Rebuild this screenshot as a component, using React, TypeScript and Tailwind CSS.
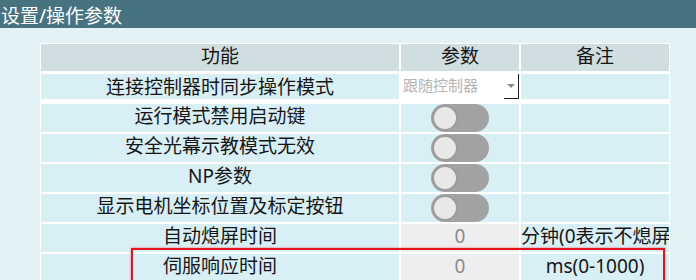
const rows: { label: string; kind: "select" | "toggle" | "input"; note?: string }[] = [
  { label: "连接控制器时同步操作模式", kind: "select" },
  { label: "运行模式禁用启动键", kind: "toggle" },
  { label: "安全光幕示教模式无效", kind: "toggle" },
  { label: "NP参数", kind: "toggle" },
  { label: "显示电机坐标位置及标定按钮", kind: "toggle" },
  { label: "自动熄屏时间", kind: "input", note: "分钟(0表示不熄屏)" },
  { label: "伺服响应时间", kind: "input", note: "ms(0-1000)" },
];

const Toggle = () => (
  <div className="w-[58px] h-[28px] rounded-full bg-[#a2a2a2] flex items-center pl-[1px]">
    <div className="w-[26px] h-[26px] rounded-full bg-[#e8e8e8] border-2 border-[#9c9c9c]"></div>
  </div>
);

const Select = () => (
  <div className="flex h-full w-full bg-white border-r border-[#222]">
    <div className="flex-1 flex items-center pl-[2px] pb-[2px] text-[15px] text-[#b4b4b4] overflow-hidden whitespace-nowrap">
      跟随控制器
    </div>
    <div className="w-[14px] flex items-center justify-center border-b border-[#222]">
      <div className="w-0 h-0 border-l-[4px] border-r-[4px] border-t-[4px] border-l-transparent border-r-transparent border-t-[#8a8a8a]"></div>
    </div>
  </div>
);

export default function App() {
  return (
    <div
      className="w-[696px] h-[280px] overflow-hidden bg-[#e3f2f7] text-[#151515]"
      style={{ fontFamily: '"Noto Sans", "Noto Sans CJK SC", sans-serif' }}
    >
      <div className="h-[28px] bg-[#477381] text-white text-[19px] leading-[20px] pl-[1px] pt-[6px] overflow-hidden whitespace-nowrap">
        设置/操作参数
      </div>
      <div className="relative ml-[40px] mt-[15px] w-[630px]">
        <div className="grid grid-cols-[358px_118px_148px] gap-[2px] bg-white p-px auto-rows-[28px] text-[19px] leading-none">
          <div className="bg-[#d0dde1] h-[27px] pb-[3px] flex items-center justify-center">功能</div>
          <div className="bg-[#d0dde1] h-[27px] pb-[3px] flex items-center justify-center">参数</div>
          <div className="bg-[#d0dde1] h-[27px] pb-[3px] flex items-center justify-center">备注</div>
          {rows.map((r, i) => (
            <div key={i} className="contents">
              <div
                className={`bg-[#d9eff6] flex items-center justify-center whitespace-nowrap ${
                  r.kind === "select" ? "h-[25px] pt-[2px]" : "pb-[3px]"
                }`}
              >
                {r.label}
              </div>
              <div
                className={`flex items-center justify-center ${
                  r.kind === "input" ? "bg-[#eeeeee] text-[#8a8a8a] pb-[3px]" : "bg-[#d9eff6]"
                } ${r.kind === "select" ? "h-[25px]" : ""} ${r.kind === "toggle" ? "pb-[1px]" : ""}`}
              >
                {r.kind === "select" && <Select />}
                {r.kind === "toggle" && <Toggle />}
                {r.kind === "input" && "0"}
              </div>
              <div
                className={`bg-[#d9eff6] overflow-hidden whitespace-nowrap flex items-center justify-center pb-[3px] ${
                  r.kind === "select" ? "h-[25px]" : ""
                }`}
              >
                {r.note && (
                  <div className="w-full overflow-hidden whitespace-nowrap text-center">{r.note}</div>
                )}
              </div>
            </div>
          ))}
        </div>
        <div className="absolute left-[91px] top-[205px] w-[534px] h-[44px] border-2 border-[#e3141a] shadow-[0_0_2px_rgba(227,20,26,0.6)]"></div>
      </div>
    </div>
  );
}
